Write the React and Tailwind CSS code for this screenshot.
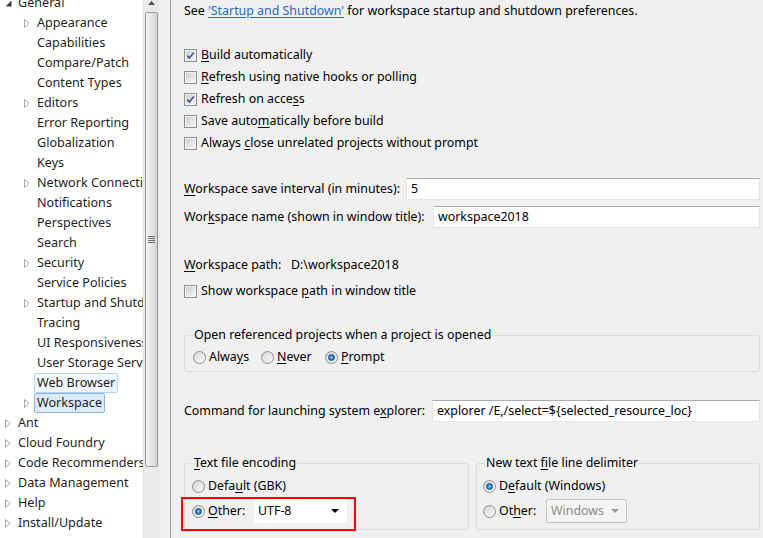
import React from 'react'

const TREE = [
  { t: 'General', l: 0, a: 'open' },
  { t: 'Appearance', l: 1, a: 'closed' },
  { t: 'Capabilities', l: 1 },
  { t: 'Compare/Patch', l: 1 },
  { t: 'Content Types', l: 1 },
  { t: 'Editors', l: 1, a: 'closed' },
  { t: 'Error Reporting', l: 1 },
  { t: 'Globalization', l: 1 },
  { t: 'Keys', l: 1 },
  { t: 'Network Connections', l: 1, a: 'closed' },
  { t: 'Notifications', l: 1 },
  { t: 'Perspectives', l: 1 },
  { t: 'Search', l: 1 },
  { t: 'Security', l: 1, a: 'closed' },
  { t: 'Service Policies', l: 1 },
  { t: 'Startup and Shutdown', l: 1, a: 'closed' },
  { t: 'Tracing', l: 1 },
  { t: 'UI Responsiveness Monitoring', l: 1 },
  { t: 'User Storage Service', l: 1 },
  { t: 'Web Browser', l: 1, sel: 'focus' },
  { t: 'Workspace', l: 1, a: 'closed', sel: 'on' },
  { t: 'Ant', l: 0, a: 'closed' },
  { t: 'Cloud Foundry', l: 0, a: 'closed' },
  { t: 'Code Recommenders', l: 0, a: 'closed' },
  { t: 'Data Management', l: 0, a: 'closed' },
  { t: 'Help', l: 0, a: 'closed' },
  { t: 'Install/Update', l: 0, a: 'closed' },
]

const SEL = {
  focus: 'border-[#b5d3f5] bg-[#f1f7fe]',
  on: 'border-[#8fb6e3] bg-[#dcebfc]',
}

function Arrow({ kind }) {
  if (kind === 'open') {
    return (
      <svg width="7" height="7" viewBox="0 0 7 7" className="ml-[2px]">
        <path d="M6.5 0.5 L6.5 6.5 L0.5 6.5 Z" fill="#3c3c3c" />
      </svg>
    )
  }
  if (kind === 'closed') {
    return (
      <svg width="6" height="9" viewBox="0 0 6 9" className="ml-[2px]">
        <path d="M0.5 0.5 L5 4.5 L0.5 8.5 Z" fill="#fff" stroke="#a6a6a6" />
      </svg>
    )
  }
  return null
}

function Tree() {
  return (
    <div className="w-[143px] shrink-0 overflow-hidden bg-white text-[12.6px]">
      <div className="-mt-[7px]">
        {TREE.map((n) => (
          <div
            key={n.t}
            className={`flex h-[20px] items-center whitespace-nowrap ${n.l ? 'pl-[22px]' : 'pl-[3px]'}`}
          >
            <span className="flex w-[12px] shrink-0 items-center">
              <Arrow kind={n.a} />
            </span>
            <span
              className={`flex h-[20px] items-center rounded-[2px] border px-[2px] text-[#1e1e1e] ${
                SEL[n.sel] || 'border-transparent'
              }`}
            >
              {n.t}
            </span>
          </div>
        ))}
      </div>
    </div>
  )
}

function Scrollbar() {
  return (
    <div className="flex w-[16px] shrink-0 flex-col items-center border-x border-[#e6e6e6] bg-[#eaeaea]">
      <div className="flex h-[10px] items-start justify-center">
        <svg width="7" height="4" viewBox="0 0 7 4" className="mt-[1px]">
          <path d="M0 4 L3.5 0 L7 4 Z" fill="#4d4d4d" />
        </svg>
      </div>
      <div className="mt-[2px] flex h-[455px] w-[13px] items-center justify-center rounded-[2px] border border-[#9a9a9a] bg-linear-to-r from-[#f4f4f4] via-[#e6e6e6] to-[#d3d3d3]">
        <div className="flex flex-col gap-[1px]">
          <span className="h-[1px] w-[7px] bg-[#6c6c6c]" />
          <span className="h-[1px] w-[7px] bg-[#6c6c6c]" />
          <span className="h-[1px] w-[7px] bg-[#6c6c6c]" />
          <span className="h-[1px] w-[7px] bg-[#6c6c6c]" />
        </div>
      </div>
    </div>
  )
}

function Check({ on }) {
  return (
    <span className="flex h-[13px] w-[13px] shrink-0 items-center justify-center border border-[#8e8f8f] bg-white">
      <span className="flex h-[11px] w-[11px] items-center justify-center border border-[#f4f4f4] bg-linear-to-br from-[#cfcfcf] to-[#f7f7f7]">
        {on && (
          <svg width="9" height="9" viewBox="0 0 9 9">
            <path d="M1.2 4.6 L3.4 7 L7.8 1.4" fill="none" stroke="#40568e" strokeWidth="1.6" />
          </svg>
        )}
      </span>
    </span>
  )
}

function Radio({ on }) {
  return (
    <span className="flex h-[13px] w-[13px] shrink-0 items-center justify-center rounded-full border border-[#8e8f8f] bg-linear-to-br from-[#d4d4d4] to-[#fbfbfb]">
      {on && (
        <span className="h-[7px] w-[7px] rounded-full border border-[#1a4f84] bg-radial from-[#8fd8fb] via-[#2b8ad0] to-[#17568f]" />
      )}
    </span>
  )
}

function CheckRow({ on, children }) {
  return (
    <div className="flex h-[22px] items-center gap-[4px]">
      <Check on={on} />
      <span>{children}</span>
    </div>
  )
}

function Field({ label, w, value }) {
  return (
    <div className="flex h-[22px] items-center">
      <span className={`${w} shrink-0 whitespace-nowrap`}>{label}</span>
      <div className="flex h-[22px] flex-1 items-center border border-[#e2e3ea] border-t-[#abadb3] bg-white px-[4px]">
        {value}
      </div>
    </div>
  )
}

export default function App() {
  return (
    <div className="flex h-[538px] w-[763px] overflow-hidden bg-[#f0f0f0] font-['Noto_Sans','Liberation_Sans',sans-serif] text-[12.4px] leading-none text-black">
      <Tree />
      <Scrollbar />
      <div className="w-[11px] shrink-0 bg-[#f0f0f0]" />
      <div className="w-[1px] shrink-0 bg-[#a0a0a0]" />

      <div className="flex min-w-0 flex-1 flex-col pl-[13px] pr-[3px]">
        <div className="mt-[1px] h-[20px] whitespace-nowrap leading-[20px]">
          See{' '}
          <span className="text-[#1f6bc4] underline underline-offset-2">'Startup and Shutdown'</span>{' '}
          for workspace startup and shutdown preferences.
        </div>

        <div className="mt-[23px]">
          <CheckRow on>
            <u className="underline-offset-2">B</u>uild automatically
          </CheckRow>
          <CheckRow>
            <u className="underline-offset-2">R</u>efresh using native hooks or polling
          </CheckRow>
          <CheckRow on>
            Refresh on acce<u className="underline-offset-2">s</u>s
          </CheckRow>
          <CheckRow>
            Save auto<u className="underline-offset-2">m</u>atically before build
          </CheckRow>
          <CheckRow>
            Always <u className="underline-offset-2">c</u>lose unrelated projects without prompt
          </CheckRow>
        </div>

        <div className="mt-[24px] flex flex-col gap-[6px]">
          <Field
            w="w-[222px]"
            label={<><u className="underline-offset-2">W</u>orkspace save interval (in minutes):</>}
            value="5"
          />
          <Field
            w="w-[249px]"
            label={<>Wor<u className="underline-offset-2">k</u>space name (shown in window title):</>}
            value="workspace2018"
          />
        </div>

        <div className="mt-[27px] flex h-[20px] items-center whitespace-nowrap">
          <span className="w-[107px] shrink-0">
            <u className="underline-offset-2">W</u>orkspace path:
          </span>
          <span>D:\workspace2018</span>
        </div>
        <div className="mt-[5px]">
          <CheckRow>
            Show workspace <u className="underline-offset-2">p</u>ath in window title
          </CheckRow>
        </div>

        <fieldset className="mt-[24px] rounded-[3px] border border-[#d5dfe5] pb-[4px] pl-[8px] pt-[3px]">
          <legend className="h-[18px] px-[1px] leading-[18px]">
            Open referenced projects when a project is opened
          </legend>
          <div className="flex h-[20px] items-center">
            <Radio />
            <span className="ml-[3px] w-[52px]">
              Alwa<u className="underline-offset-2">y</u>s
            </span>
            <Radio />
            <span className="ml-[3px] w-[48px]">
              <u className="underline-offset-2">N</u>ever
            </span>
            <Radio on />
            <span className="ml-[3px]">
              <u className="underline-offset-2">P</u>rompt
            </span>
          </div>
        </fieldset>

        <div className="mt-[28px]">
          <Field
            w="w-[248px]"
            label={<>Command for launching system e<u className="underline-offset-2">x</u>plorer:</>}
            value="explorer /E,/select=${selected_resource_loc}"
          />
        </div>

        <div className="mt-[32px] flex gap-[7px]">
          <fieldset className="w-[285px] shrink-0 rounded-[3px] border border-[#d5dfe5] pb-[6px] pl-[7px] pt-[4px]">
            <legend className="ml-[1px] h-[18px] px-[1px] leading-[18px]">
              <u className="underline-offset-2">T</u>ext file encoding
            </legend>
            <div className="flex h-[20px] items-center gap-[3px]">
              <Radio />
              <span>
                Defa<u className="underline-offset-2">u</u>lt (GBK)
              </span>
            </div>
            <div className="relative mt-[3px] flex h-[24px] items-center">
              <Radio on />
              <span className="ml-[3px] w-[46px]">
                <u className="underline-offset-2">O</u>ther:
              </span>
              <div className="flex h-[24px] w-[93px] items-center justify-between bg-white pl-[4px] pr-[8px]">
                <span>UTF-8</span>
                <svg width="8" height="4" viewBox="0 0 8 4">
                  <path d="M0 0 L8 0 L4 4 Z" fill="#000" />
                </svg>
              </div>
              <div className="absolute -left-[11px] -top-[2px] h-[34px] w-[175px] border-2 border-[#ff0000]" />
            </div>
          </fieldset>

          <fieldset className="min-w-0 flex-1 rounded-[3px] border border-[#d5dfe5] pb-[6px] pl-[6px] pt-[4px]">
            <legend className="ml-[2px] h-[18px] px-[1px] leading-[18px]">
              New text <u className="underline-offset-2">f</u>ile line delimiter
            </legend>
            <div className="flex h-[20px] items-center gap-[3px]">
              <Radio on />
              <span>
                D<u className="underline-offset-2">e</u>fault (Windows)
              </span>
            </div>
            <div className="mt-[3px] flex h-[24px] items-center">
              <Radio />
              <span className="ml-[3px] w-[47px]">
                Ot<u className="underline-offset-2">h</u>er:
              </span>
              <div className="flex h-[24px] w-[81px] items-center justify-between rounded-[2px] border border-[#c5c5c5] bg-[#f4f4f4] pl-[4px] pr-[7px] text-[#8a8a8a]">
                <span>Windows</span>
                <svg width="8" height="4" viewBox="0 0 8 4">
                  <path d="M0 0 L8 0 L4 4 Z" fill="#9a9a9a" />
                </svg>
              </div>
            </div>
          </fieldset>
        </div>
      </div>
    </div>
  )
}
